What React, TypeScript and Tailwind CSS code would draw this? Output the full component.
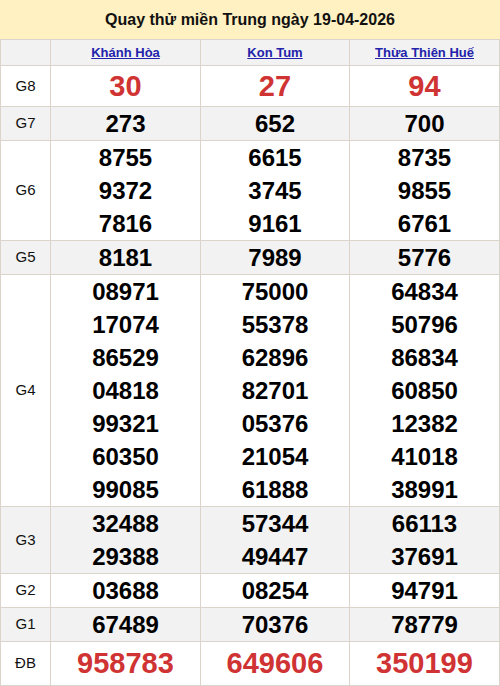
import React from "react";

type Row = { label: string; values: string[][]; height: string; red?: boolean; big?: string };

const rows: Row[] = [
  { label: "G8", values: [["30"], ["27"], ["94"]], height: "h-[41px]", red: true },
  { label: "G7", values: [["273"], ["652"], ["700"]], height: "h-[34px]" },
  { label: "G6", values: [["8755", "9372", "7816"], ["6615", "3745", "9161"], ["8735", "9855", "6761"]], height: "h-[100px]" },
  { label: "G5", values: [["8181"], ["7989"], ["5776"]], height: "h-[34px]" },
  {
    label: "G4",
    values: [
      ["08971", "17074", "86529", "04818", "99321", "60350", "99085"],
      ["75000", "55378", "62896", "82701", "05376", "21054", "61888"],
      ["64834", "50796", "86834", "60850", "12382", "41018", "38991"],
    ],
    height: "h-[232px]",
  },
  { label: "G3", values: [["32488", "29388"], ["57344", "49447"], ["66113", "37691"]], height: "h-[67px]" },
  { label: "G2", values: [["03688"], ["08254"], ["94791"]], height: "h-[34px]" },
  { label: "G1", values: [["67489"], ["70376"], ["78779"]], height: "h-[34px]" },
  { label: "ĐB", values: [["958783"], ["649606"], ["350199"]], height: "h-[44px]", red: true },
];

const colW = ["w-[150px]", "w-[149px]", "w-[150px]"];

export default function App() {
  return (
    <div className="w-[500px] h-[686px] bg-white" style={{ fontFamily: '"Liberation Sans", Arial, sans-serif' }}>
      <div className="h-[39px] bg-[#fff1c1] flex items-center justify-center text-[16px] font-bold text-[#111]">
        Quay thử miền Trung ngày 19-04-2026
      </div>
      <div className="border-t border-r border-[#dcd3ca]">
        <div className="flex h-[26px] bg-[#f2f2f2] border-b border-[#dcd3ca]">
          <div className="w-[50px] border-l border-[#dcd3ca]" />
          {["Khánh Hòa", "Kon Tum", "Thừa Thiên Huế"].map((n, i) => (
            <div key={n} className={`${colW[i]} border-l border-[#dcd3ca] flex items-center justify-center`}>
              <span className="text-[13px] font-bold text-[#2222aa] underline">{n}</span>
            </div>
          ))}
        </div>
        {rows.map((r, ri) => (
          <div
            key={r.label}
            className={`flex ${r.height} border-b border-[#dcd3ca] ${ri % 2 === 1 ? "bg-[#f2f2f2]" : "bg-white"}`}
          >
            <div className="w-[50px] border-l border-[#dcd3ca] flex items-center justify-center text-[15px] text-[#111]">
              {r.label}
            </div>
            {r.values.map((vals, ci) => (
              <div
                key={ci}
                className={`${colW[ci]} border-l border-[#dcd3ca] flex flex-col items-center justify-center`}
              >
                {vals.map((v, vi) => (
                  <div
                    key={vi}
                    className={
                      r.red
                        ? "text-[29px] leading-[33px] font-bold text-[#d03333]"
                        : "text-[24px] leading-[33px] font-bold text-black"
                    }
                  >
                    {v}
                  </div>
                ))}
              </div>
            ))}
          </div>
        ))}
      </div>
    </div>
  );
}
